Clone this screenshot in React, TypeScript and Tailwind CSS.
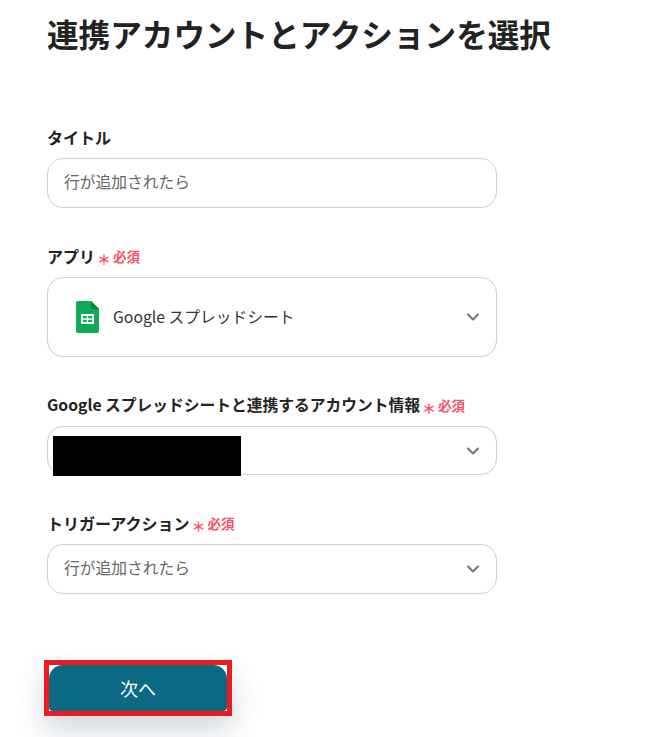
import { ChevronDown } from "lucide-react";

const font = { fontFamily: '"Noto Sans CJK JP", "Noto Sans", sans-serif' };

function Required() {
  return (
    <span className="ml-[2px] flex items-center text-[13.500px] font-bold text-[#fb5068]">
      <span className="mt-[5px] mr-[2px] text-[14px] leading-none">＊</span>
      必須
    </span>
  );
}

function SheetsIcon() {
  return (
    <svg width="23" height="32" viewBox="0 0 23 32">
      <path d="M2 0h13l8 8v22a2 2 0 0 1-2 2H2a2 2 0 0 1-2-2V2a2 2 0 0 1 2-2z" fill="#0fa958" />
      <path d="M15 0l8 8h-6a2 2 0 0 1-2-2z" fill="#0b8043" />
      <path d="M5 13h13v10H5z" fill="#fff" />
      <path d="M7 15h3.8v2.2H7zM12.2 15H16v2.2h-3.800zM7 18.800h3.800V21H7zM12.200 18.800H16V21h-3.800z" fill="#0fa958" />
    </svg>
  );
}

export default function App() {
  return (
    <div style={font} className="h-[737px] w-[653px] overflow-hidden bg-white pl-[47px] text-[#222]">
      <h1 className="pt-[10px] text-[31.600px] leading-[46px] font-bold">連携アカウントとアクションを選択</h1>

      <label className="mt-[69px] block text-[16px] leading-[24px] font-bold">タイトル</label>
      <div className="mt-[9px] flex h-[50px] w-[450px] items-center rounded-[16px] border border-[#cbd0d8] px-[16px] pb-[3px] text-[15.750px] text-[#666]">
        行が追加されたら
      </div>

      <div className="mt-[36px] flex h-[24px] items-center">
        <span className="text-[16px] font-bold">アプリ</span>
        <Required />
      </div>
      <div className="mt-[9px] flex h-[80px] w-[450px] items-center justify-between rounded-[16px] border border-[#cbd0d8] pr-[13px] pl-[28px]">
        <div className="flex items-center gap-[14px] text-[15.750px] text-[#333]">
          <SheetsIcon />
          <span className="pb-[1px]">Google スプレッドシート</span>
        </div>
        <ChevronDown size={20} strokeWidth={2.500} className="text-[#777]" />
      </div>

      <div className="mt-[36px] flex h-[24px] items-center">
        <span className="text-[15.750px] font-bold">Google スプレッドシートと連携するアカウント情報</span>
        <Required />
      </div>
      <div className="relative mt-[9px] flex h-[49px] w-[450px] items-center justify-end rounded-[16px] border border-[#cbd0d8] pr-[13px]">
        <div className="absolute top-[9px] left-[5px] h-[40px] w-[188px] bg-black" />
        <ChevronDown size={20} strokeWidth={2.500} className="text-[#777]" />
      </div>

      <div className="mt-[36px] flex h-[24px] items-center">
        <span className="text-[16px] font-bold">トリガーアクション</span>
        <Required />
      </div>
      <div className="mt-[9px] flex h-[50px] w-[450px] items-center justify-between rounded-[16px] border border-[#cbd0d8] pr-[13px] pl-[16px] text-[15.750px] text-[#666]">
        <span className="pb-[2px]">行が追加されたら</span>
        <ChevronDown size={20} strokeWidth={2.500} className="text-[#777]" />
      </div>

      <div className="mt-[66px] -ml-[3px] h-[56px] w-[188px] border-[5px] border-[#e81c22] shadow-[0_14px_28px_rgba(30,60,80,0.2)]">
        <button className="flex h-full w-full items-center justify-center rounded-t-[14px] rounded-b-[4px] bg-[#0b6983] text-[18px] text-white">
          次へ
        </button>
      </div>
    </div>
  );
}
